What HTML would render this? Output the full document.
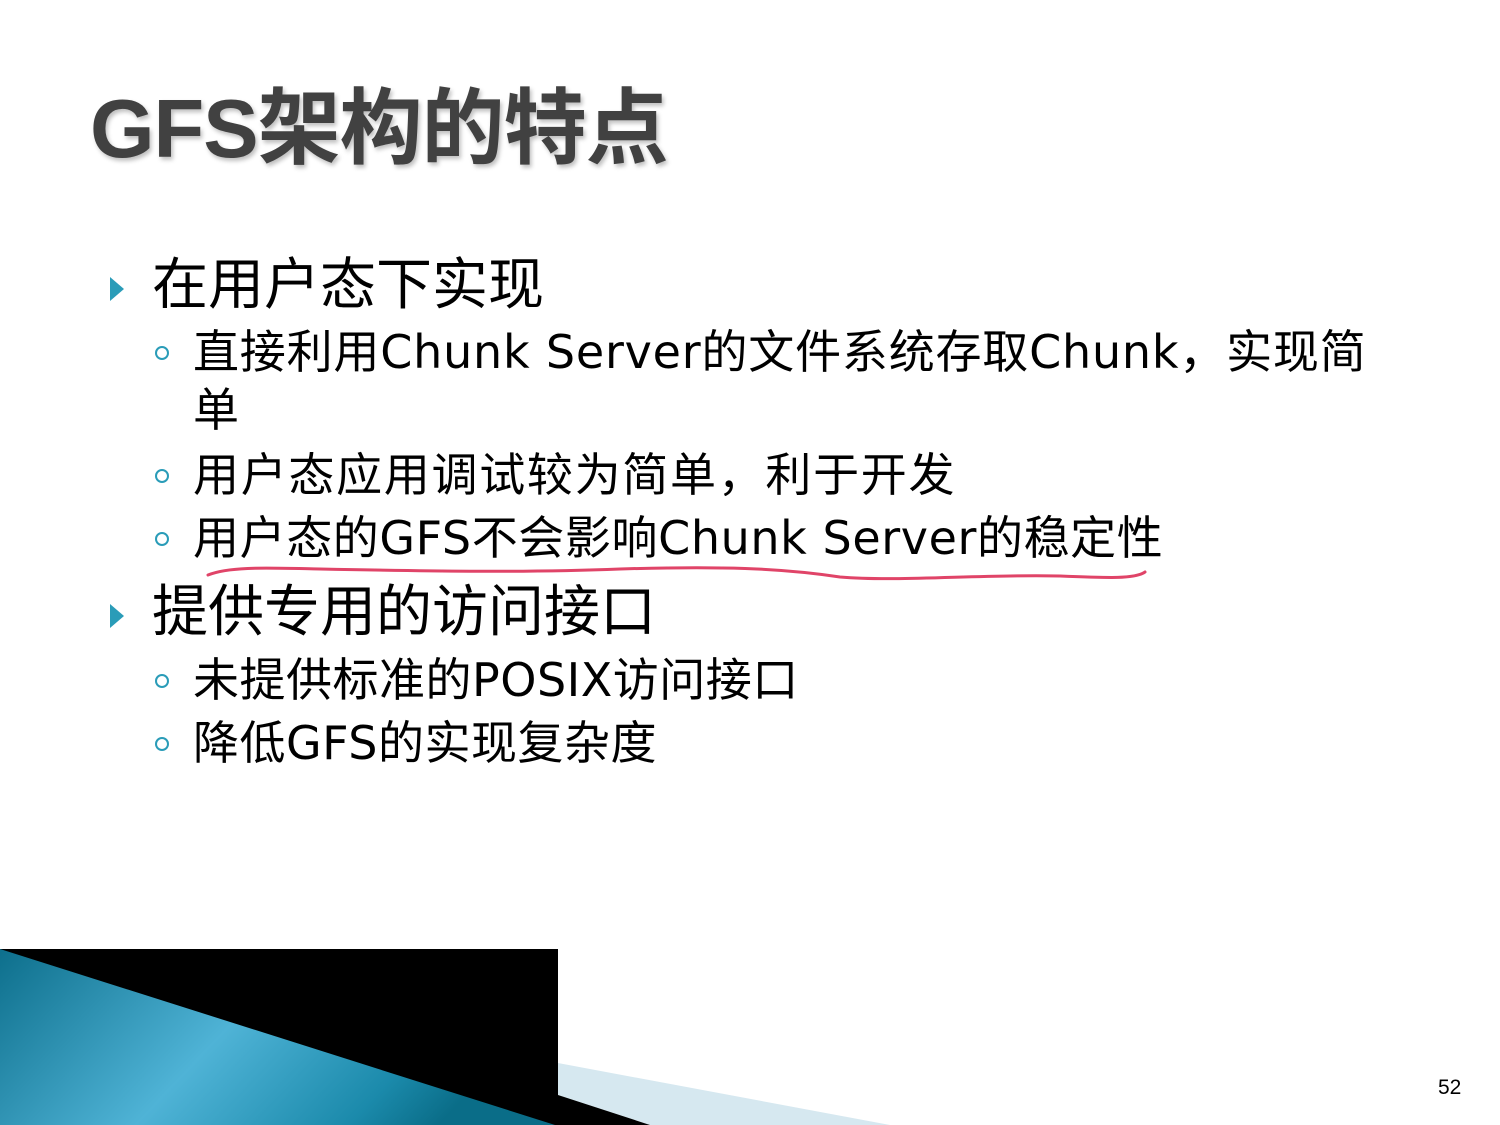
<!DOCTYPE html>
<html><head><meta charset="utf-8"><style>
html,body{margin:0;padding:0}
body{width:1500px;height:1125px;position:relative;overflow:hidden;background:#fff;font-family:"Liberation Sans","Noto Sans CJK SC",sans-serif;color:#000}
.t{position:absolute;white-space:nowrap;line-height:1}
.title{left:90px;top:87px;font-size:83px;font-weight:bold;color:#414141;text-shadow:2px 3px 4px rgba(0,0,0,0.25);letter-spacing:-1px}
.l1{font-size:56px;left:152px}
.l2{font-size:46px;left:193px;font-family:"DejaVu Sans","Noto Sans CJK SC",sans-serif}
.tri{position:absolute;left:110px;width:0;height:0;border-top:12px solid transparent;border-bottom:12px solid transparent;border-left:14px solid #2a9cb8}
.ring{position:absolute;left:155px;width:10px;height:10px;border:2px solid #2a9cb8;border-radius:50%}
</style></head><body>
<div class="t title">GFS架构的特点</div>

<div class="tri" style="top:277px"></div>
<div class="t l1" style="top:257px">在用户态下实现</div>
<div class="ring" style="top:346px"></div>
<div class="t l2" style="top:329px;letter-spacing:0.8px">直接利用Chunk Server的文件系统存取Chunk，实现简</div>
<div class="t l2" style="top:387px">单</div>
<div class="ring" style="top:469px"></div>
<div class="t l2" style="top:452px;letter-spacing:1.7px">用户态应用调试较为简单，利于开发</div>
<div class="ring" style="top:532px"></div>
<div class="t l2" style="top:515px;letter-spacing:0.6px">用户态的GFS不会影响Chunk Server的稳定性</div>

<div class="tri" style="top:604px"></div>
<div class="t l1" style="top:584px">提供专用的访问接口</div>
<div class="ring" style="top:674px"></div>
<div class="t l2" style="top:657px;letter-spacing:0.5px">未提供标准的POSIX访问接口</div>
<div class="ring" style="top:737px"></div>
<div class="t l2" style="top:720px;letter-spacing:0.5px">降低GFS的实现复杂度</div>

<svg style="position:absolute;left:0;top:0" width="1500" height="1125">
<path d="M208,575 C230,566 270,568 320,569 C420,571 520,573 620,569 C720,566 780,568 840,577 C900,582 980,574 1060,576 C1110,578 1135,579 1145,572" fill="none" stroke="#e04468" stroke-width="3" stroke-linecap="round"/>
<defs>
<linearGradient id="g" x1="0" y1="0" x2="1" y2="0.3">
<stop offset="0" stop-color="#0d6f8c"/>
<stop offset="0.5" stop-color="#4fb3d6"/>
<stop offset="0.85" stop-color="#1b8aab"/>
<stop offset="1" stop-color="#0a6d88"/>
</linearGradient>
</defs>
<rect x="0" y="949" width="558" height="176" fill="#000"/>
<polygon points="0,949 555,1125 0,1125" fill="url(#g)"/>
<polygon points="558,1063 890,1125 650,1125 558,1095" fill="#d6e8f0"/>
<polygon points="558,1095 650,1125 558,1125" fill="#000"/>
</svg>
<div class="t" style="left:1438px;top:1077px;font-size:21px">52</div>
</body></html>
